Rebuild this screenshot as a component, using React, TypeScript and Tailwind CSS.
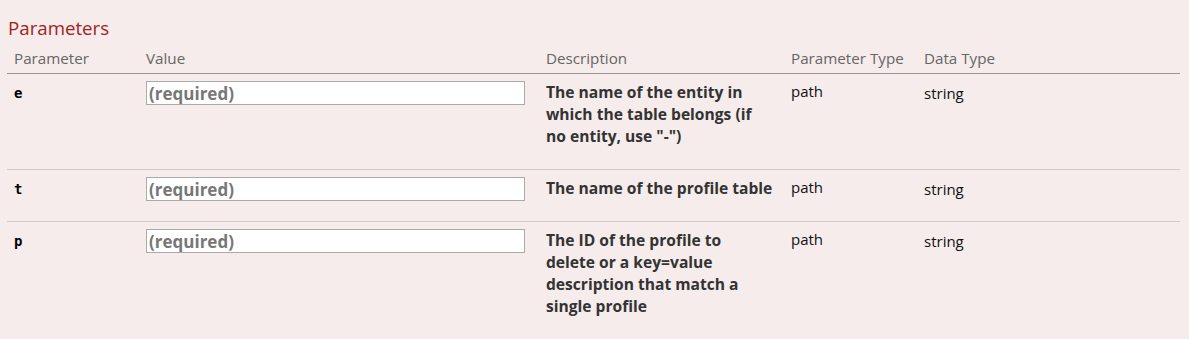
const params = [
  {
    name: "e",
    description: 'The name of the entity in which the table belongs (if no entity, use "-")',
  },
  { name: "t", description: "The name of the profile table" },
  {
    name: "p",
    description:
      "The ID of the profile to delete or a key=value description that match a single profile",
  },
];

const cols = "grid grid-cols-[132px_400px_245px_133px_1fr]";

export default function App() {
  return (
    <div className="min-h-screen bg-[#f6eceb] pl-[7px] pr-[9px] font-['Open_Sans',sans-serif]">
      <h4 className="pt-[16px] pl-[1px] text-[18.7px] leading-[24px] text-[#a41e22]">Parameters</h4>
      <div className="mt-[3px]">
        <div className={`${cols} border-b border-[#9a9594] text-[15.2px] leading-[22px] text-[#666]`}>
          {["Parameter", "Value", "Description", "Parameter Type", "Data Type"].map((h) => (
            <div key={h} className="px-[7px] pt-[4px] pb-[4px]">
              {h}
            </div>
          ))}
        </div>
        {params.map((p, i) => (
          <div
            key={p.name}
            className={`${cols} text-[15px] leading-[22px] ${i < params.length - 1 ? "border-b border-[#d2cdcc]" : ""}`}
          >
            <div className="px-[7px] pt-[8px] font-['DejaVu_Sans_Mono',monospace] text-[14px] font-bold text-black">
              {p.name}
            </div>
            <div className="px-[7px] pt-[7px]">
              <input
                placeholder="(required)"
                className="h-[24px] w-[379px] border border-[#aaa] bg-white px-[2px] text-[17px] font-bold placeholder:text-[#777] outline-none"
              />
            </div>
            <div className="px-[7px] pt-[7px] pb-[8px]">
              <p className="mb-[14px] w-[227px] text-[15.6px] font-bold text-[#333]">{p.description}</p>
            </div>
            <div className="px-[7px] pt-[6px] text-[#111]">path</div>
            <div className="px-[7px] pt-[8px] text-[#111]">string</div>
          </div>
        ))}
      </div>
    </div>
  );
}
